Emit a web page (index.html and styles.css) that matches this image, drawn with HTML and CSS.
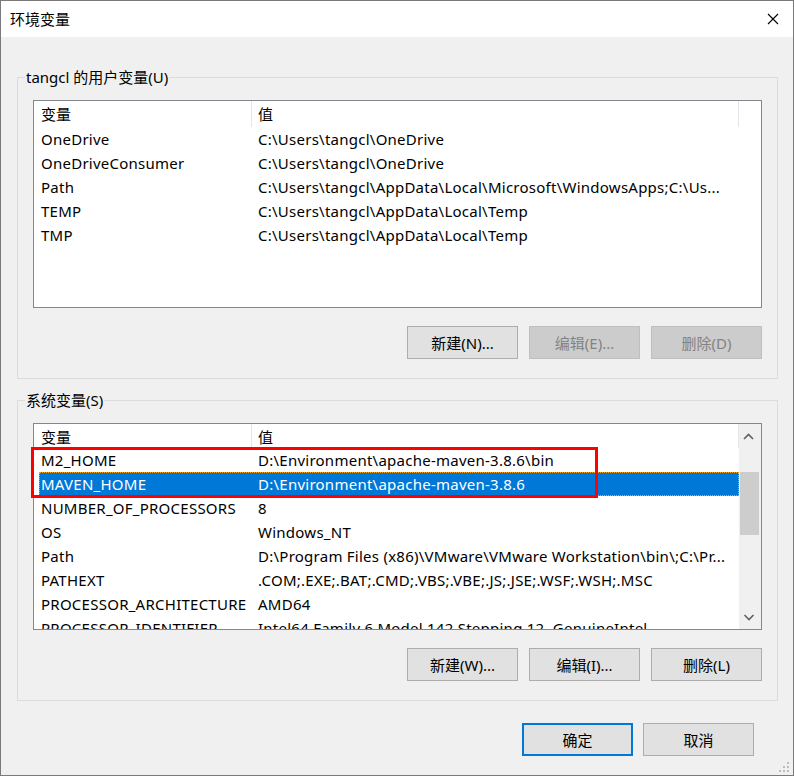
FILE: index.html
```html
<!DOCTYPE html>
<html lang="zh-CN">

<head>
    <meta charset="UTF-8">
    <title>环境变量</title>
    <link rel="stylesheet" href="styles.css">
</head>

<body>
    <div class="window">
        <!-- 标题栏 -->
        <div class="titlebar">
            <span class="title">环境变量</span>
            <svg class="close" width="12" height="12" viewBox="0 0 12 12">
                <path d="M1 1 L11 11 M11 1 L1 11" stroke="#000" stroke-width="1.1" fill="none" />
            </svg>
        </div>

        <div class="client">
            <!-- 用户变量 -->
            <fieldset class="group">
                <legend>tangcl 的用户变量(U)</legend>
                <div class="list list-user">
                    <div class="list-main">
                        <div class="list-head">
                            <div class="hcell name">变量</div>
                            <div class="hcell value">值</div>
                            <div class="hcell filler"></div>
                        </div>
                        <div class="row"><div class="cell name">OneDrive</div><div class="cell value">C:\Users\tangcl\OneDrive</div></div>
                        <div class="row"><div class="cell name">OneDriveConsumer</div><div class="cell value">C:\Users\tangcl\OneDrive</div></div>
                        <div class="row"><div class="cell name">Path</div><div class="cell value">C:\Users\tangcl\AppData\Local\Microsoft\WindowsApps;C:\Us...</div></div>
                        <div class="row"><div class="cell name">TEMP</div><div class="cell value">C:\Users\tangcl\AppData\Local\Temp</div></div>
                        <div class="row"><div class="cell name">TMP</div><div class="cell value">C:\Users\tangcl\AppData\Local\Temp</div></div>
                    </div>
                </div>
                <div class="buttons">
                    <button class="btn">新建(N)...</button>
                    <button class="btn" disabled>编辑(E)...</button>
                    <button class="btn" disabled>删除(D)</button>
                </div>
            </fieldset>

            <!-- 系统变量 -->
            <fieldset class="group group-system">
                <legend>系统变量(S)</legend>
                <div class="list list-system">
                    <div class="list-main">
                        <div class="list-head">
                            <div class="hcell name">变量</div>
                            <div class="hcell value">值</div>
                        </div>
                        <div class="row"><div class="cell name">M2_HOME</div><div class="cell value">D:\Environment\apache-maven-3.8.6\bin</div></div>
                        <div class="row selected"><div class="cell name">MAVEN_HOME</div><div class="cell value">D:\Environment\apache-maven-3.8.6</div></div>
                        <div class="row"><div class="cell name">NUMBER_OF_PROCESSORS</div><div class="cell value">8</div></div>
                        <div class="row"><div class="cell name">OS</div><div class="cell value">Windows_NT</div></div>
                        <div class="row"><div class="cell name">Path</div><div class="cell value">D:\Program Files (x86)\VMware\VMware Workstation\bin\;C:\Pr...</div></div>
                        <div class="row"><div class="cell name">PATHEXT</div><div class="cell value">.COM;.EXE;.BAT;.CMD;.VBS;.VBE;.JS;.JSE;.WSF;.WSH;.MSC</div></div>
                        <div class="row"><div class="cell name">PROCESSOR_ARCHITECTURE</div><div class="cell value">AMD64</div></div>
                        <div class="row"><div class="cell name">PROCESSOR_IDENTIFIER</div><div class="cell value">Intel64 Family 6 Model 142 Stepping 12, GenuineIntel</div></div>
                    </div>
                    <!-- 滚动条 -->
                    <div class="scrollbar">
                        <svg class="arrow" width="22" height="24" viewBox="0 0 22 24">
                            <path d="M5 15 L9.5 10.5 L14 15" stroke="#606060" stroke-width="1.6" fill="none" />
                        </svg>
                        <div class="track"><div class="thumb"></div></div>
                        <svg class="arrow" width="22" height="24" viewBox="0 0 22 24">
                            <path d="M5.5 10 L10 14.5 L14.5 10" stroke="#606060" stroke-width="1.6" fill="none" />
                        </svg>
                    </div>
                </div>
                <div class="buttons">
                    <button class="btn">新建(W)...</button>
                    <button class="btn">编辑(I)...</button>
                    <button class="btn">删除(L)</button>
                </div>
            </fieldset>

            <!-- 确定 / 取消 -->
            <div class="footer">
                <button class="btn default">确定</button>
                <button class="btn">取消</button>
            </div>
        </div>

        <!-- 标注框 -->
        <div class="mark"></div>

        <!-- 右下角拖拽 -->
        <svg class="grip" width="12" height="12" viewBox="0 0 12 12">
            <rect x="9" y="1" width="2" height="2" fill="#bcbcbc" />
            <rect x="5" y="5" width="2" height="2" fill="#bcbcbc" />
            <rect x="9" y="5" width="2" height="2" fill="#bcbcbc" />
            <rect x="1" y="9" width="2" height="2" fill="#bcbcbc" />
            <rect x="5" y="9" width="2" height="2" fill="#bcbcbc" />
            <rect x="9" y="9" width="2" height="2" fill="#bcbcbc" />
        </svg>
    </div>
</body>

</html>
```

FILE: styles.css
```css
body {
    margin: 0;
    padding: 0;
    font-family: "Noto Sans", "Noto Sans CJK SC", sans-serif;
    font-size: 15px;
    color: #000;
    background-color: #fff;
}

.window {
    position: relative;
    width: 794px;
    height: 776px;
    box-sizing: border-box;
    border: 1px solid #7a7a7a;
    background-color: #f0f0f0;
    overflow: hidden;
}

/* 标题栏 */
.titlebar {
    height: 36px;
    background-color: #fff;
    display: flex;
    align-items: center;
    justify-content: space-between;
    padding: 0 14px 0 9px;
}

.title {
    line-height: 20px;
}

.close {
    display: block;
}

.client {
    padding: 30px 0 0 16px;
}

/* 分组框 */
.group {
    width: 761px;
    box-sizing: border-box;
    margin: 0;
    padding: 13px 15px 19px 15px;
    border: 1px solid #dcdcdc;
    min-inline-size: 0;
}

.group legend {
    margin-left: -8px;
    padding: 0 1px;
    line-height: 20px;
}

.group-system {
    margin-top: 11px;
}

/* 列表 */
.list {
    display: flex;
    width: 729px;
    box-sizing: border-box;
    border: 1px solid #828790;
    background-color: #fff;
    overflow: hidden;
}

.list-user {
    height: 208px;
}

.list-system {
    height: 207px;
}

.list-main {
    flex: 1;
    min-width: 0;
    overflow: hidden;
}

.list-head {
    display: flex;
    height: 24px;
}

.list-user .list-head {
    height: 26px;
}

.hcell {
    box-sizing: border-box;
    line-height: 24px;
    padding-top: 1px;
    white-space: nowrap;
}

.hcell.name {
    width: 218px;
    padding-left: 7px;
    border-right: 1px solid #e5e5e5;
}

.hcell.value {
    width: 487px;
    padding-left: 6px;
    border-right: 1px solid #e5e5e5;
}

.hcell.filler {
    flex: 1;
}

.row {
    display: flex;
    width: 700px;
    height: 24px;
    margin-left: 5px;
    box-sizing: border-box;
}

.cell {
    box-sizing: border-box;
    line-height: 24px;
    letter-spacing: 0.25px;
    white-space: nowrap;
    overflow: hidden;
}

.cell.name {
    width: 213px;
    padding-left: 2px;
}

.cell.value {
    width: 487px;
    padding-left: 6px;
}

.row.selected {
    background-color: #0078d7;
    color: #fff;
    outline: 1px dotted #f5a623;
    outline-offset: -1px;
}

/* 滚动条 */
.scrollbar {
    width: 22px;
    display: flex;
    flex-direction: column;
    background-color: #f0f0f0;
}

.scrollbar .arrow {
    display: block;
}

.track {
    flex: 1;
    padding-top: 24px;
}

.thumb {
    width: 19px;
    height: 63px;
    margin-left: 1px;
    background-color: #cdcdcd;
}

/* 按钮 */
.buttons {
    display: flex;
    justify-content: flex-end;
    gap: 11px;
    margin-top: 18px;
}

.btn {
    width: 111px;
    height: 33px;
    box-sizing: border-box;
    border: 1px solid #adadad;
    background-color: #e1e1e1;
    font-family: inherit;
    font-size: 15px;
    color: #000;
    padding: 0;
}

.btn:disabled {
    background-color: #cccccc;
    border-color: #bfbfbf;
    color: #838383;
}

.btn.default {
    border: 2px solid #0078d7;
}

.footer {
    display: flex;
    justify-content: flex-end;
    gap: 10px;
    margin-top: 22px;
    padding-right: 39px;
}

/* 红色标注 */
.mark {
    position: absolute;
    left: 30px;
    top: 446px;
    width: 567px;
    height: 51px;
    box-sizing: border-box;
    border: 3px solid #ff0000;
}

.grip {
    position: absolute;
    right: 3px;
    bottom: 2px;
}
```
